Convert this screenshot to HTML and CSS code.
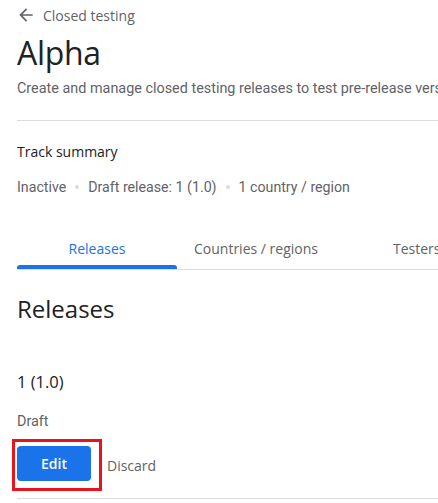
FILE: index.html
```html
<!DOCTYPE html>
<html>
<head>
<meta charset="utf-8">
<link rel="stylesheet" href="styles.css">
</head>
<body>
<div class="page">
  <div class="back">
    <svg class="back-icon" width="20" height="20" viewBox="0 0 24 24"><path d="M20 11H7.83l5.59-5.59L12 4l-8 8 8 8 1.41-1.41L7.83 13H20v-2z" fill="#5f6368"/></svg>
    <span>Closed testing</span>
  </div>
  <h1 class="title">Alpha</h1>
  <p class="desc">Create and manage closed testing releases to test pre-release versions of your app</p>
  <hr class="divider">
  <h2 class="summary-title">Track summary</h2>
  <div class="summary">
    <span>Inactive</span><span class="dot"></span><span>Draft release: 1 (1.0)</span><span class="dot"></span><span>1 country / region</span>
  </div>
  <div class="tabs">
    <div class="tab active">Releases</div>
    <div class="tab">Countries / regions</div>
    <div class="tab">Testers</div>
  </div>
  <h2 class="section-title">Releases</h2>
  <h3 class="release-name">1 (1.0)</h3>
  <div class="status">Draft</div>
  <div class="actions">
    <div class="highlight"><button class="btn-primary">Edit</button></div>
    <button class="btn-text">Discard</button>
  </div>
  <hr class="divider bottom">
</div>
</body>
</html>
```
FILE: styles.css
```css
html, body { margin: 0; padding: 0; background: #fff; }
body { font-family: Roboto, "Liberation Sans", sans-serif; color: #202124; overflow: hidden; width: 438px; height: 503px; }
.page { padding-left: 17px; overflow: hidden; }
.back { display: flex; align-items: center; height: 20px; margin-top: 5px; font-family: "Open Sans", Roboto, sans-serif; font-size: 14px; color: #5f6368; }
.back-icon { margin-left: -1px; margin-right: 7px; }
.title { margin: 8px 0 0; font-family: "Open Sans", Roboto, sans-serif; font-weight: 400; font-size: 32px; line-height: 40px; color: #202124; letter-spacing: -0.3px; }
.desc { margin: 6px 0 0; font-size: 14.4px; line-height: 20px; color: #5f6368; white-space: nowrap; overflow: hidden; }
.divider { border: 0; border-top: 1px solid #dadce0; margin: 21px 0 0; }
.summary-title { margin: 21px 0 0; font-family: "Open Sans", Roboto, sans-serif; font-size: 14px; font-weight: 500; line-height: 20px; color: #202124; }
.summary { display: flex; align-items: center; margin-top: 15px; font-size: 14.2px; line-height: 20px; color: #5f6368; white-space: nowrap; }
.dot { width: 4px; height: 4px; border-radius: 50%; background: #dadce0; margin: 0 9px; }
.tabs { display: flex; margin-top: 32px; border-bottom: 1px solid #dadce0; height: 40px; overflow: hidden; }
.tab { flex: 0 0 auto; width: 160px; display: flex; align-items: center; justify-content: center; font-family: "Open Sans", Roboto, sans-serif; font-size: 14px; font-weight: 500; color: #5f6368; white-space: nowrap; position: relative; box-sizing: border-box; padding-bottom: 2px; }
.tab:nth-child(2) { width: 158px; }
.tab:nth-child(3) { justify-content: flex-start; padding-left: 58px; }
.tab.active { color: #1a73e8; }
.tab.active::after { content: ""; position: absolute; left: 0; right: 0; bottom: 0; height: 4px; background: #1a73e8; border-radius: 3px 3px 0 0; }
.section-title { margin: 23px 0 0; font-family: "Open Sans", Roboto, sans-serif; font-size: 24px; font-weight: 400; line-height: 32px; color: #202124; }
.release-name { margin: 45px 0 0; font-family: "Open Sans", Roboto, sans-serif; font-size: 16.5px; font-weight: 500; line-height: 24px; color: #202124; }
.status { margin-top: 18px; font-size: 14.4px; line-height: 20px; color: #5f6368; }
.actions { display: flex; align-items: center; margin-top: 7px; margin-left: -5px; }
.highlight { border: 3px solid #e8141c; padding: 4px 8px 7px 2px; }
.btn-primary { display: block; width: 74px; height: 35px; border: 0; border-radius: 4px; background: #1a73e8; color: #fff; font-family: "Open Sans", Roboto, sans-serif; font-size: 14px; font-weight: 600; padding: 0; }
.btn-text { border: 0; background: none; padding: 0; margin-left: 5px; font-family: "Open Sans", Roboto, sans-serif; font-size: 14px; font-weight: 500; color: #5f6368; }
.divider.bottom { margin-top: 7px; }
```
